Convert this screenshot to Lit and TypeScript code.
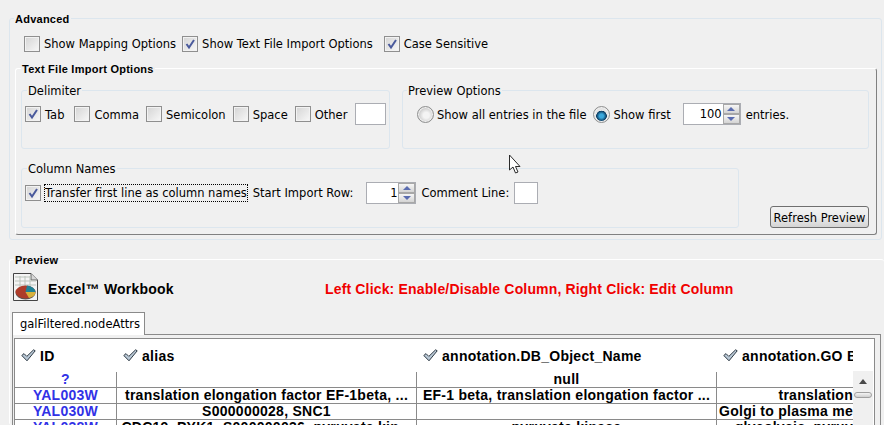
import { LitElement, html, css, svg } from "lit";
import { customElement } from "lit/decorators.js";

const check = svg`<svg class="chk" width="12" height="12" viewBox="0 0 12 12"><path d="M2.5 6 L5 9.5 L10 2" fill="none" stroke="#4a5a9c" stroke-width="2"/></svg>`;

const hdrCheck = html`<svg class="hc" width="15" height="13" viewBox="0 0 15 13"><path d="M0.8 6.5 L3 4.6 L5.8 7.4 L12.6 0.8 L14.2 1.8 L6 11.8 Z" fill="#b9c8d6" stroke="#2f3a44" stroke-width="1"/></svg>`;

function cb(on: boolean, label: string, cls = "") {
  return html`<span class="opt ${cls}"><span class="box">${on ? check : ""}</span><span class="lbl">${label}</span></span>`;
}

function spinner(val: string, cls: string) {
  return html`<span class="spin ${cls}"><span class="val">${val}</span><span class="arrows"><span class="arr"><i class="up"></i></span><span class="arr"><i class="down"></i></span></span></span>`;
}

const rows: string[][] = [
  ["?", "", "", "null", "", "", ""],
  ["YAL003W", "translation elongation factor EF-1beta, ...", "c", "EF-1 beta, translation elongation factor ...", "c", "translation", "r"],
  ["YAL030W", "S000000028, SNC1", "c", "", "", "Golgi to plasma me", "r"],
  ["YAL038W", "CDC19, PYK1, S000000036, pyruvate kin...", "c", "pyruvate kinase", "c", "glycolysis, pyruv", "r"],
];

@customElement("app-root")
export class AppRoot extends LitElement {
  static styles = css`
    :host { display: block; width: 884px; height: 425px; overflow: hidden; background: #f0f0f0; font-family: "DejaVu Sans", sans-serif; font-size: 11.5px; color: #000; position: relative; }
    * { box-sizing: border-box; }
    .page { padding: 18px 0 0 9px; display: flex; flex-direction: column; width: 884px; height: 425px; }
    .group { border: 1px solid #dce6ee; border-radius: 3px; position: relative; }
    .legend { position: absolute; top: -7px; left: 5px; line-height: 14px; background: #f0f0f0; padding: 0 1px; white-space: nowrap; }
    .b { font: 700 11px "Liberation Sans", sans-serif; letter-spacing: .25px; line-height: 14px; left: 4px; }
    .tfi > .b { left: 5px; }
    .adv { width: 873px; height: 222px; padding: 16px 5px 0 5px; }
    .row { display: flex; align-items: center; }
    .top { gap: 6px; height: 18px; padding-left: 9px; }
    .m5 { margin-left: 5px; }
    .m3 { margin-left: 3px; }
    .opt { display: inline-flex; align-items: center; gap: 4px; height: 18px; white-space: nowrap; }
    .box { width: 16px; height: 16px; border: 1px solid #8f8f8f; background: linear-gradient(135deg, #d4d4d4, #f8f8f8); box-shadow: inset 0 0 0 1px #f2f2f2; display: inline-flex; align-items: center; justify-content: center; flex: none; }
    .lbl { line-height: 16px; }
    .tfi { margin-top: 15px; height: 167px; width: 862px; border: 1px solid #fff; border-right-color: #808080; border-bottom-color: #808080; padding: 21px 6px 0 5px; }
    .cols { display: flex; gap: 12px; }
    .delim { width: 369px; height: 59px; padding: 12px 0 0 3px; }
    .delim .row { gap: 7px; }
    .delim .lbl { padding-top: 2px; }
    .delim .txt { margin-left: 1px; }
    .prev { width: 467px; height: 59px; padding: 12px 0 0 14px; }
    .prev .legend { left: 4px; }
    .txt { width: 31px; height: 22px; border: 1px solid #abadb3; background: #fff; flex: none; }
    .radio { width: 17px; height: 17px; border-radius: 50%; border: 1px solid #8e8f8f; background: radial-gradient(circle at 55% 55%, #f4f4f4 0 3px, #d0d0d0 7px); box-shadow: inset 0 0 0 1px #f0f0f0; flex: none; }
    .radio.on { background: radial-gradient(circle at 50% 60%, #3aa8dc 0 2px, #0a3a60 5px, #e8e8e8 5.6px, #d8d8d8); }
    .prow { height: 22px; white-space: nowrap; }
    .t { padding-top: 2px; }
    .ropt { display: inline-flex; align-items: center; gap: 3px; margin-right: 7px; }
    .spin { display: inline-flex; border: 1px solid #abadb3; background: #fff; height: 22px; flex: none; }
    .val { flex: 1; text-align: right; line-height: 20px; padding-right: 1px; }
    .arrows { width: 17px; display: flex; flex-direction: column; flex: none; }
    .arr { height: 10px; background: linear-gradient(#f6f6f6, #d4d4d4); border: 1px solid #a8a8a8; display: flex; align-items: center; justify-content: center; }
    .arr i { width: 0; height: 0; border-left: 4px solid transparent; border-right: 4px solid transparent; }
    .up { border-bottom: 4px solid #5a6cb0; }
    .down { border-top: 4px solid #5a6cb0; }
    .s100 { width: 58px; margin-left: 5px; margin-right: 5px; }
    .s1 { width: 50px; margin-left: 13px; margin-right: 5px; }
    .lower { display: flex; margin-top: 19px; }
    .cn { width: 718px; height: 60px; padding: 13px 0 0 3px; }
    .cn .row { height: 22px; }
    .focus .lbl { outline: 1px dotted #000; margin-right: 6px; }
    .refresh { width: 99px; height: 22px; margin: 38px 0 0 31px; border: 1px solid #6f6f6f; border-radius: 3px; background: linear-gradient(#f2f2f2, #ebebeb 50%, #d4d4d4); text-align: center; line-height: 22px; white-space: nowrap; }
    .txt.c { width: 24px; margin-left: 5px; }
    .preview { margin-top: 19px; width: 875px; height: 166px; border-right: none; border-bottom: none; padding: 12px 0 0 2px; border-color: #fff; }
    .head { display: flex; align-items: center; height: 30px; }
    .title { font: 700 14px "Liberation Sans", sans-serif; letter-spacing: .2px; margin: 4px 0 0 9px; width: 277px; white-space: nowrap; }
    .red { font: 700 14px "Liberation Sans", sans-serif; letter-spacing: .16px; color: #f00000; white-space: nowrap; margin-top: 4px; }
    .tabbar { margin-top: 10px; height: 22px; }
    .tab { width: 133px; height: 23px; background: #fff; border: 1px solid #8a8a8a; border-bottom: none; padding: 0 0 0 7px; line-height: 22px; position: relative; z-index: 1; }
    .pane { width: 869px; height: 91px; background: #f0f0f0; border-top: 1px solid #8a8a8a; border-left: 1px solid #8a8a8a; border-right: 1px solid #8a8a8a; padding: 3px 4px 0 1px; display: flex; }
    .tablewrap { width: 861px; height: 100px; background: #fff; border: 1px solid #8a8a8a; overflow: hidden; position: relative; flex: none; }
    table { border-collapse: separate; border-spacing: 0; table-layout: fixed; width: 838px; font: 700 14px "Liberation Sans", sans-serif; letter-spacing: .27px; }
    col.c1 { width: 102px; } col.c2 { width: 300px; } col.c3 { width: 300px; } col.c4 { width: 136px; }
    th { height: 33px; text-align: left; font-weight: 700; padding: 2px 0 0 6px; white-space: nowrap; overflow: hidden; }
    th .in { display: inline-flex; align-items: center; gap: 4px; }
    td { height: 16px; padding: 0; line-height: 15px; border-right: 1px solid #8a8a8a; border-bottom: 1px solid #8a8a8a; white-space: nowrap; overflow: hidden; text-align: center; }
    td:last-child { border-right: none; }
    td.id { color: #3232e6; }
    td.r { text-align: right; }
    .scroll { position: absolute; left: 838px; top: 32px; width: 20px; height: 70px; background: #f0f0f0; display: flex; flex-direction: column; align-items: center; }
    .sa { width: 0; height: 0; border-left: 4px solid transparent; border-right: 4px solid transparent; border-bottom: 5px solid #4a4a4a; margin-top: 8px; }
    .thumb { width: 18px; height: 6px; margin-top: 8px; border: 1px solid #a0a0a0; border-radius: 3px; background: linear-gradient(#f4f4f4, #cfcfcf); }
    .ico { flex: none; margin-left: -1px; }
    .cursor { position: absolute; left: 508px; top: 154px; }
  `;

  render() {
    return html`<div class="page">
      <div class="group adv">
        <span class="legend b">Advanced</span>
        <div class="row top">
          ${cb(false, "Show Mapping Options")}
          ${cb(true, "Show Text File Import Options")}
          ${cb(true, "Case Sensitive", "m5")}
        </div>
        <div class="group tfi">
          <span class="legend b">Text File Import Options</span>
          <div class="cols">
            <div class="group delim">
              <span class="legend">Delimiter</span>
              <div class="row">
                ${cb(true, "Tab")}${cb(false, "Comma", "m3")}${cb(false, "Semicolon")}${cb(false, "Space")}${cb(false, "Other")}
                <span class="txt"></span>
              </div>
            </div>
            <div class="group prev">
              <span class="legend">Preview Options</span>
              <div class="row prow">
                <span class="ropt"><span class="radio"></span><span class="t">Show all entries in the file</span></span>
                <span class="ropt"><span class="radio on"></span><span class="t">Show first</span></span>
                ${spinner("100", "s100")}
                <span class="t">entries.</span>
              </div>
            </div>
          </div>
          <div class="lower">
            <div class="group cn">
              <span class="legend">Column Names</span>
              <div class="row">
                ${cb(true, "Transfer first line as column names", "focus")}
                <span>Start Import Row:</span>
                ${spinner("1", "s1")}
                <span>Comment Line:</span>
                <span class="txt c"></span>
              </div>
            </div>
            <div class="refresh">Refresh Preview</div>
          </div>
        </div>
      </div>
      <div class="group preview">
        <span class="legend b">Preview</span>
        <div class="head">
          <svg class="ico" width="28" height="30" viewBox="0 0 28 30">
            <path d="M2.5 1.5 H20 L26.5 8 V28.5 H2.5 Z" fill="#f4f4f4" stroke="#444" stroke-width="1"/>
            <path d="M20 1.5 V8 H26.5" fill="#d8d8d8" stroke="#666" stroke-width="1"/>
            <path d="M4 5 H19 M4 9 H25 M4 13 H25 M9 4 V16 M14 4 V16 M19 4 V16" stroke="#bcc4bc" stroke-width="1"/>
            <ellipse cx="14.5" cy="21" rx="10" ry="6.5" fill="#555"/>
            <ellipse cx="14.5" cy="20" rx="10" ry="6.5" fill="#ad3c2a"/>
            <path d="M14.5 20 L16 13.6 A10 6.5 0 0 1 24.5 20 Z" fill="#1f8296"/>
            <path d="M14.5 20 L24.5 20 A10 6.5 0 0 1 18 26 Z" fill="#d8b23c"/>
          </svg>
          <span class="title">Excel™ Workbook</span>
          <span class="red">Left Click: Enable/Disable Column, Right Click: Edit Column</span>
        </div>
        <div class="tabbar"><div class="tab">galFiltered.nodeAttrs</div></div>
        <div class="pane">
          <div class="tablewrap">
            <table>
              <colgroup><col class="c1"/><col class="c2"/><col class="c3"/><col class="c4"/></colgroup>
              <thead><tr>
                <th><span class="in">${hdrCheck}ID</span></th>
                <th><span class="in">${hdrCheck}alias</span></th>
                <th><span class="in">${hdrCheck}annotation.DB_Object_Name</span></th>
                <th><span class="in">${hdrCheck}annotation.GO B</span></th>
              </tr></thead>
              <tbody>
                ${rows.map((r) => html`<tr>
                  <td class="id">${r[0]}</td>
                  <td class=${r[2]}>${r[1]}</td>
                  <td class=${r[4]}>${r[3]}</td>
                  <td class=${r[6]}>${r[5]}</td>
                </tr>`)}
              </tbody>
            </table>
            <div class="scroll"><div class="sa"></div><div class="thumb"></div></div>
          </div>
        </div>
      </div>
      <svg class="cursor" width="14" height="21" viewBox="0 0 14 21"><path d="M1.5 1 V16 L5 13 L7.5 19 L10 18 L7.5 12.5 L12 12.5 Z" fill="#fff" stroke="#2a2a2a" stroke-width="1"/></svg>
    </div>`;
  }
}
